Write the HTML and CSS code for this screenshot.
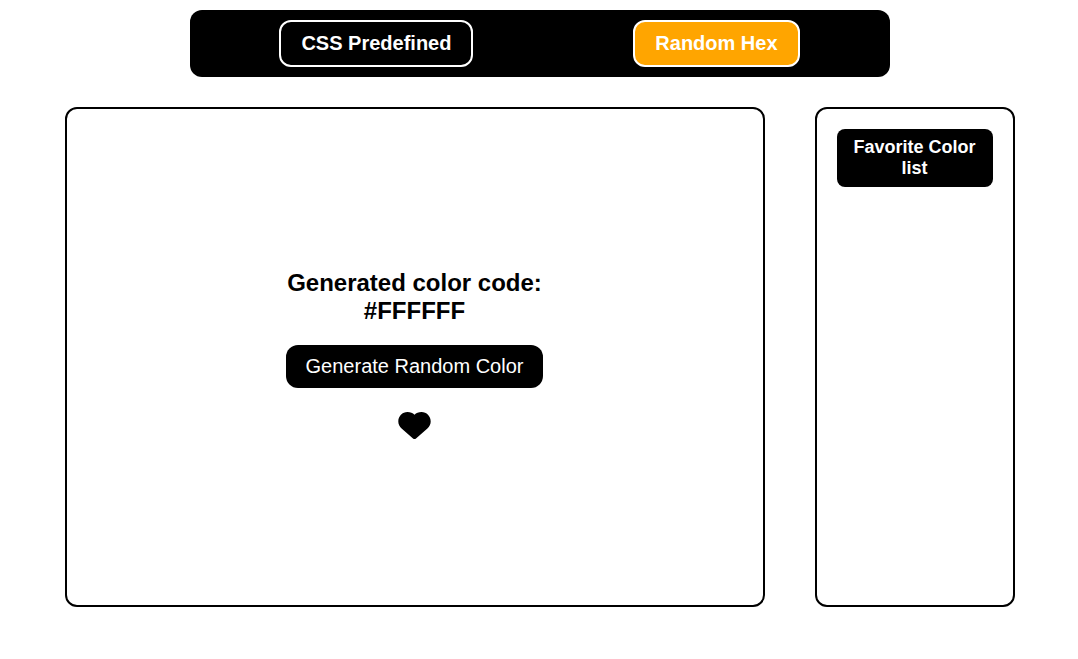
FILE: index.html
```html
<!DOCTYPE html>
<html lang="en">
<head>
<meta charset="utf-8">
<title>Color Generator</title>
<link rel="stylesheet" href="styles.css">
</head>
<body>
<nav class="navbar">
  <a class="nav-link" href="#predefined">CSS Predefined</a>
  <a class="nav-link active" href="#hex">Random Hex</a>
</nav>
<main class="content">
  <section class="generator">
    <h2 class="code">Generated color code:<br>#FFFFFF</h2>
    <button class="generate" type="button">Generate Random Color</button>
    <button class="favorite" type="button" aria-label="Add to favorites">
      <svg class="heart" viewBox="0 0 33 27" aria-hidden="true"><path d="M16.500 2.800C18.300 1 20.500 0 23.500 0C28.600 0 32.700 4.200 32.700 9.500C32.700 12.400 31.500 14.500 29.400 16.500L18 26.500Q16.500 27.500 15 26.500L3.600 16.500C1.500 14.500 .3 12.400 .3 9.500C.3 4.200 4.400 0 9.500 0C12.500 0 14.700 1 16.500 2.800Z"/></svg>
    </button>
  </section>
  <aside class="favorites">
    <h3 class="favorites-title">Favorite Color list</h3>
  </aside>
</main>
</body>
</html>
```
FILE: styles.css
```css
* {
  box-sizing: border-box;
  margin: 0;
  padding: 0;
}

body {
  font-family: "Liberation Sans", Arial, sans-serif;
  background: #fff;
  color: #000;
  padding: 10px 20px 10px 21px;
}

.navbar {
  display: flex;
  justify-content: space-around;
  align-items: center;
  max-width: 700px;
  margin: 0 auto;
  padding: 10px;
  background: #000;
  border-radius: 12px;
}

.nav-link {
  padding: 10px 20px;
  border: 2px solid #fff;
  border-radius: 12px;
  color: #fff;
  font-size: 20px;
  font-weight: bold;
  line-height: 23px;
  text-decoration: none;
}

.nav-link.active {
  background: orange;
}

.content {
  display: flex;
  justify-content: center;
  gap: 50px;
  margin-top: 30px;
}

.generator {
  display: flex;
  flex: 0 1 700px;
  flex-direction: column;
  align-items: center;
  justify-content: center;
  gap: 20px;
  min-height: 500px;
  border: 2px solid #000;
  border-radius: 12px;
}

.code {
  font-size: 24px;
  line-height: 28px;
  text-align: center;
}

.generate {
  padding: 10px 20px;
  border: 0;
  border-radius: 12px;
  background: #000;
  color: #fff;
  font-family: inherit;
  font-size: 20px;
  line-height: 23px;
  cursor: pointer;
}

.favorite {
  padding: 4px 0 6px;
  border: 0;
  background: none;
  color: inherit;
  cursor: pointer;
}

.heart {
  display: block;
  width: 33px;
  height: 27px;
  fill: currentColor;
}

.favorites {
  flex: 0 0 200px;
  padding: 20px;
  border: 2px solid #000;
  border-radius: 12px;
}

.favorites-title {
  padding: 8px;
  border-radius: 8px;
  background: #000;
  color: #fff;
  font-size: 18px;
  line-height: 21px;
  text-align: center;
}
```
